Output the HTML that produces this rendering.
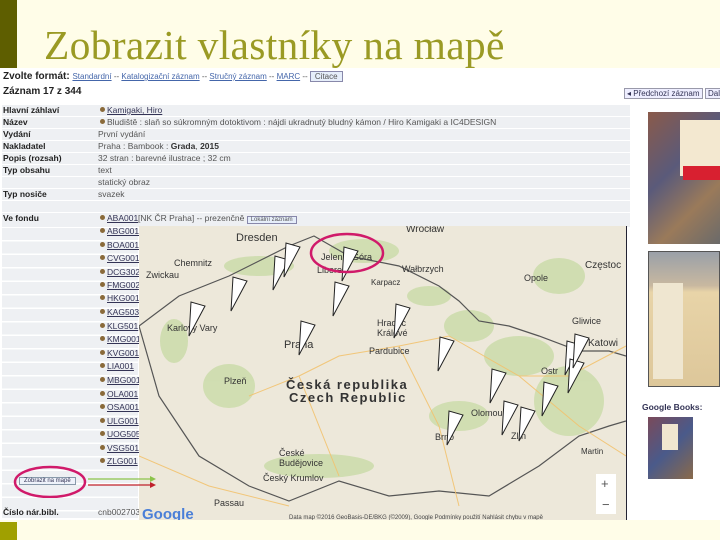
<!DOCTYPE html>
<html><head><meta charset="utf-8"><style>
body{margin:0;width:720px;height:540px;overflow:hidden;background:#fffde8;position:relative;font-family:"Liberation Sans",sans-serif}
.a{position:absolute}
.title{left:44px;top:21px;font-family:"Liberation Serif",serif;font-size:41.5px;color:#9a9a24;white-space:nowrap;letter-spacing:0.3px}
.shot{left:0;top:68px;width:720px;height:452px;background:#fff;overflow:hidden}
.r{position:absolute;left:2px;width:628px;height:11px;background:#eef0f3}
.l{position:absolute;left:3px;font-size:8.5px;font-weight:bold;color:#222;white-space:nowrap}
.v{position:absolute;left:98px;font-size:8.5px;color:#555;white-space:nowrap}
.k{position:absolute;left:100px;font-size:8.5px;color:#335;text-decoration:underline;white-space:nowrap}
.k:before,.d:before{content:"";display:inline-block;width:5px;height:5px;border-radius:50%;background:#8a6a3a;margin-right:2px;vertical-align:1px}
.lnk{color:#4466aa;text-decoration:underline}
</style></head><body>
<div class="a" style="left:0;top:0;width:17px;height:68px;background:#5e5e00"></div>
<div class="a title">Zobrazit vlastníky na mapě</div>
<div class="a shot">
 <div class="a" style="left:3px;top:3px;font-size:10px;font-weight:bold;color:#222;white-space:nowrap">Zvolte formát: <span style="font-weight:normal;font-size:8px;color:#555"><span class="lnk">Standardní</span> -- <span class="lnk">Katalogizační záznam</span> -- <span class="lnk">Stručný záznam</span> -- <span class="lnk">MARC</span> -- <span style="border:1px solid #88a;background:#e6eefa;padding:0 4px;text-decoration:none">Citace</span></span></div>
 <div class="a" style="left:3px;top:18px;font-size:10px;font-weight:bold;color:#222">Záznam 17 z 344</div>
 <div class="a" style="left:624px;top:20px;font-size:8px;border:1px solid #99a;background:#eef;padding:0 2px;color:#335">◂ Předchozí záznam</div>
 <div class="a" style="left:705px;top:20px;font-size:8px;border:1px solid #99a;background:#eef;padding:0 2px;color:#335">Další</div>

 <div class="r" style="top:37px"></div><div class="r" style="top:49px"></div><div class="r" style="top:61px"></div><div class="r" style="top:73px"></div><div class="r" style="top:85px"></div><div class="r" style="top:97px"></div><div class="r" style="top:109px"></div><div class="r" style="top:121px"></div><div class="r" style="top:133px"></div><div class="r" style="top:145px;height:14px"></div>
 <div class="r" style="left:2px;width:136px;top:160px;height:290px;background:repeating-linear-gradient(#eef0f3 0 12px,#fff 12px 13.5px)"></div>

 <div class="l" style="top:37px">Hlavní záhlaví</div><div class="d v" style="top:37px;left:100px"><span class="lnk" style="color:#335">Kamigaki, Hiro</span></div>
 <div class="l" style="top:49px">Název</div><div class="d v" style="top:49px;left:100px">Bludiště : slaň so súkromným dotoktivom : nájdi ukradnutý bludný kámon / Hiro Kamigaki a IC4DESIGN</div>
 <div class="l" style="top:61px">Vydání</div><div class="v" style="top:61px">První vydání</div>
 <div class="l" style="top:73px">Nakladatel</div><div class="v" style="top:73px">Praha : Bambook : <b style="color:#333">Grada</b>, <b style="color:#333">2015</b></div>
 <div class="l" style="top:85px">Popis (rozsah)</div><div class="v" style="top:85px">32 stran : barevné ilustrace ; 32 cm</div>
 <div class="l" style="top:97px">Typ obsahu</div><div class="v" style="top:97px">text</div>
 <div class="v" style="top:109px">statický obraz</div>
 <div class="l" style="top:121px">Typ nosiče</div><div class="v" style="top:121px">svazek</div>
 <div class="l" style="top:145px">Ve fondu</div><div class="k" style="top:145px">ABA001</div><div class="v" style="left:138px;top:145px">[NK ČR Praha] -- prezenčně <span style="border:1px solid #88a;background:#e6eefa;font-size:6px;padding:0 3px">Lokální záznam</span></div>
 <div class="k" style="top:158px">ABG001</div><div class="k" style="top:172px">BOA001</div><div class="k" style="top:185px">CVG001</div><div class="k" style="top:199px">DCG302</div><div class="k" style="top:212px">FMG002</div><div class="k" style="top:225px">HKG001</div><div class="k" style="top:239px">KAG503</div><div class="k" style="top:253px">KLG501</div><div class="k" style="top:266px">KMG001</div><div class="k" style="top:280px">KVG001</div><div class="k" style="top:293px">LIA001</div><div class="k" style="top:307px">MBG001</div><div class="k" style="top:321px">OLA001</div><div class="k" style="top:334px">OSA001</div><div class="k" style="top:348px">ULG001</div><div class="k" style="top:361px">UOG505</div><div class="k" style="top:375px">VSG501</div><div class="k" style="top:388px">ZLG001</div>
 <div class="a" style="left:19px;top:409px;font-size:6px;border:1px solid #89a;background:#eef2fa;padding:0 4px;color:#335">Zobrazit na mapě</div>
 <div class="l" style="top:439px">Číslo nár.bibl.</div><div class="v" style="top:439px">cnb002703</div>

 <svg class="a" style="left:139px;top:158px" width="487" height="295" viewBox="0 0 487 295">
  <rect width="487" height="295" fill="#ede8da"/>
  <g fill="#cbdcaa" opacity=".85">
   <ellipse cx="35" cy="115" rx="14" ry="22"/><ellipse cx="120" cy="40" rx="35" ry="10"/><ellipse cx="225" cy="25" rx="35" ry="12"/><ellipse cx="290" cy="70" rx="22" ry="10"/><ellipse cx="330" cy="100" rx="25" ry="16"/><ellipse cx="380" cy="130" rx="35" ry="20"/><ellipse cx="430" cy="175" rx="35" ry="35"/><ellipse cx="180" cy="240" rx="55" ry="12"/><ellipse cx="420" cy="50" rx="26" ry="18"/><ellipse cx="90" cy="160" rx="26" ry="22"/><ellipse cx="320" cy="190" rx="30" ry="15"/>
  </g>
  <path d="M0 100 L40 70 L90 50 L120 35 L150 20 L175 10 L210 30 L260 40 L300 60 L320 75 L340 95 L370 100 L400 110 L440 125 L470 125 L487 130" fill="none" stroke="#555" stroke-width="1.2"/>
  <path d="M0 100 L20 170 L60 230 L110 260 L150 275 L200 255 L250 270 L300 265 L350 270 L400 240 L440 210 L470 200 L487 195" fill="none" stroke="#555" stroke-width="1.2"/>
  <g stroke="#f2c26e" stroke-width="1" fill="none" opacity=".9">
   <path d="M0 230 L70 260 L150 280 M110 170 L160 150 L200 130 L260 120 L310 110 L380 150 L430 150 L487 120 M160 150 L200 250 M260 120 L300 200 L320 280 M380 150 L440 200 L487 230"/>
  </g>
  <text x="97" y="15" font-size="11" fill="#333">Dresden</text>
  <text x="35" y="40" font-size="9" fill="#333">Chemnitz</text><text x="7" y="52" font-size="9" fill="#333">Zwickau</text>
  <text x="28" y="105" font-size="9" fill="#333">Karlovy Vary</text>
  <text x="145" y="122" font-size="11" fill="#333">Praha</text>
  <text x="85" y="158" font-size="9" fill="#333">Plzeň</text>
  <text x="147" y="163" font-size="13" font-weight="bold" fill="#333" letter-spacing="1.5">Česká republika</text>
  <text x="150" y="176" font-size="13" font-weight="bold" fill="#333" letter-spacing="1.5">Czech Republic</text>
  <text x="182" y="34" font-size="9" fill="#333">Jelenia Góra</text><text x="178" y="47" font-size="9" fill="#333">Liberec</text>
  <text x="263" y="46" font-size="9" fill="#333">Wałbrzych</text><text x="232" y="59" font-size="8" fill="#333">Karpacz</text>
  <text x="267" y="6" font-size="10" fill="#333">Wrocław</text><text x="385" y="55" font-size="9" fill="#333">Opole</text>
  <text x="446" y="42" font-size="10" fill="#333">Częstoc</text><text x="433" y="98" font-size="9" fill="#333">Gliwice</text><text x="449" y="120" font-size="10" fill="#333">Katowi</text>
  <text x="238" y="100" font-size="9" fill="#333">Hradec</text><text x="238" y="110" font-size="9" fill="#333">Králové</text><text x="230" y="128" font-size="9" fill="#333">Pardubice</text>
  <text x="402" y="148" font-size="9" fill="#333">Ostr</text><text x="332" y="190" font-size="9" fill="#333">Olomou</text>
  <text x="296" y="214" font-size="9" fill="#333">Brno</text><text x="372" y="213" font-size="9" fill="#333">Zlín</text>
  <text x="140" y="230" font-size="9" fill="#333">České</text><text x="140" y="240" font-size="9" fill="#333">Budějovice</text><text x="124" y="255" font-size="9" fill="#333">Český Krumlov</text>
  <text x="75" y="280" font-size="9" fill="#333">Passau</text><text x="442" y="228" font-size="8" fill="#333">Martin</text>
  <text x="3" y="293" font-size="15" font-weight="bold" fill="#4a7fd8">Google</text>
  <text x="150" y="293" font-size="6" fill="#444">Data map ©2016 GeoBasis-DE/BKG (©2009), Google   Podmínky použití   Nahlásit chybu v mapě</text>
  <rect x="457" y="248" width="20" height="40" fill="#fff"/><text x="462" y="262" font-size="13" fill="#555">+</text><text x="463" y="283" font-size="13" fill="#555">−</text>
  <g fill="#fff" stroke="#222" stroke-width="1">
   <polygon points="50,110 52,76 66,80"/><polygon points="92,85 94,51 108,55"/><polygon points="134,64 136,30 150,34"/><polygon points="145,51 147,17 161,21"/><polygon points="194,90 196,56 210,60"/><polygon points="203,55 205,21 219,25"/><polygon points="160,129 162,95 176,99"/><polygon points="255,112 257,78 271,82"/><polygon points="299,145 301,111 315,115"/><polygon points="308,219 310,185 324,189"/><polygon points="351,177 353,143 367,147"/><polygon points="363,209 365,175 379,179"/><polygon points="380,215 382,181 396,185"/><polygon points="403,190 405,156 419,160"/><polygon points="426,149 428,115 442,119"/><polygon points="429,167 431,133 445,137"/><polygon points="434,142 436,108 450,112"/>
  </g>
  <ellipse cx="208" cy="27" rx="36" ry="19" fill="none" stroke="#d01a6a" stroke-width="2.5"/>
 </svg>
 <div class="a" style="left:626px;top:158px;width:1px;height:294px;background:#223"></div>
 <svg class="a" style="left:0;top:390px" width="160" height="40"><ellipse cx="50" cy="24" rx="35" ry="15" fill="none" stroke="#d01a6a" stroke-width="2.5"/><line x1="88" y1="21" x2="150" y2="21" stroke="#8bc34a" stroke-width="1.2"/><polygon points="150,18 156,21 150,24" fill="#8bc34a"/><line x1="88" y1="27" x2="150" y2="27" stroke="#c0202a" stroke-width="1.2"/><polygon points="150,24 156,27 150,30" fill="#c0202a"/></svg>

 <div class="a" style="left:648px;top:44px;width:72px;height:132px;background:linear-gradient(135deg,#8a5a4a,#5a5a7a 40%,#9a7a5a 70%,#6a6a6a)"></div>
 <div class="a" style="left:680px;top:52px;width:40px;height:56px;background:#f3e8d0"></div>
 <div class="a" style="left:683px;top:98px;width:37px;height:14px;background:#d82030"></div>
 <div class="a" style="left:648px;top:183px;width:72px;height:136px;background:linear-gradient(#9aa0a8 0,#c8b8a0 25%,#e8d4a8 30%,#ddc79a 100%);border:1px solid #555;box-sizing:border-box"></div>
 <div class="a" style="left:653px;top:215px;width:30px;height:96px;background:#efe6d0"></div>
 <div class="a" style="left:642px;top:334px;font-size:8.5px;font-weight:bold;color:#335">Google Books:</div>
 <div class="a" style="left:648px;top:349px;width:45px;height:62px;background:linear-gradient(135deg,#7a4a5a,#4a5a8a 50%,#8a6a4a)"></div>
 <div class="a" style="left:662px;top:356px;width:16px;height:26px;background:#f0e6d0"></div>
</div>
<div class="a" style="left:0;top:522px;width:17px;height:18px;background:#a0a000"></div>
</body></html>
